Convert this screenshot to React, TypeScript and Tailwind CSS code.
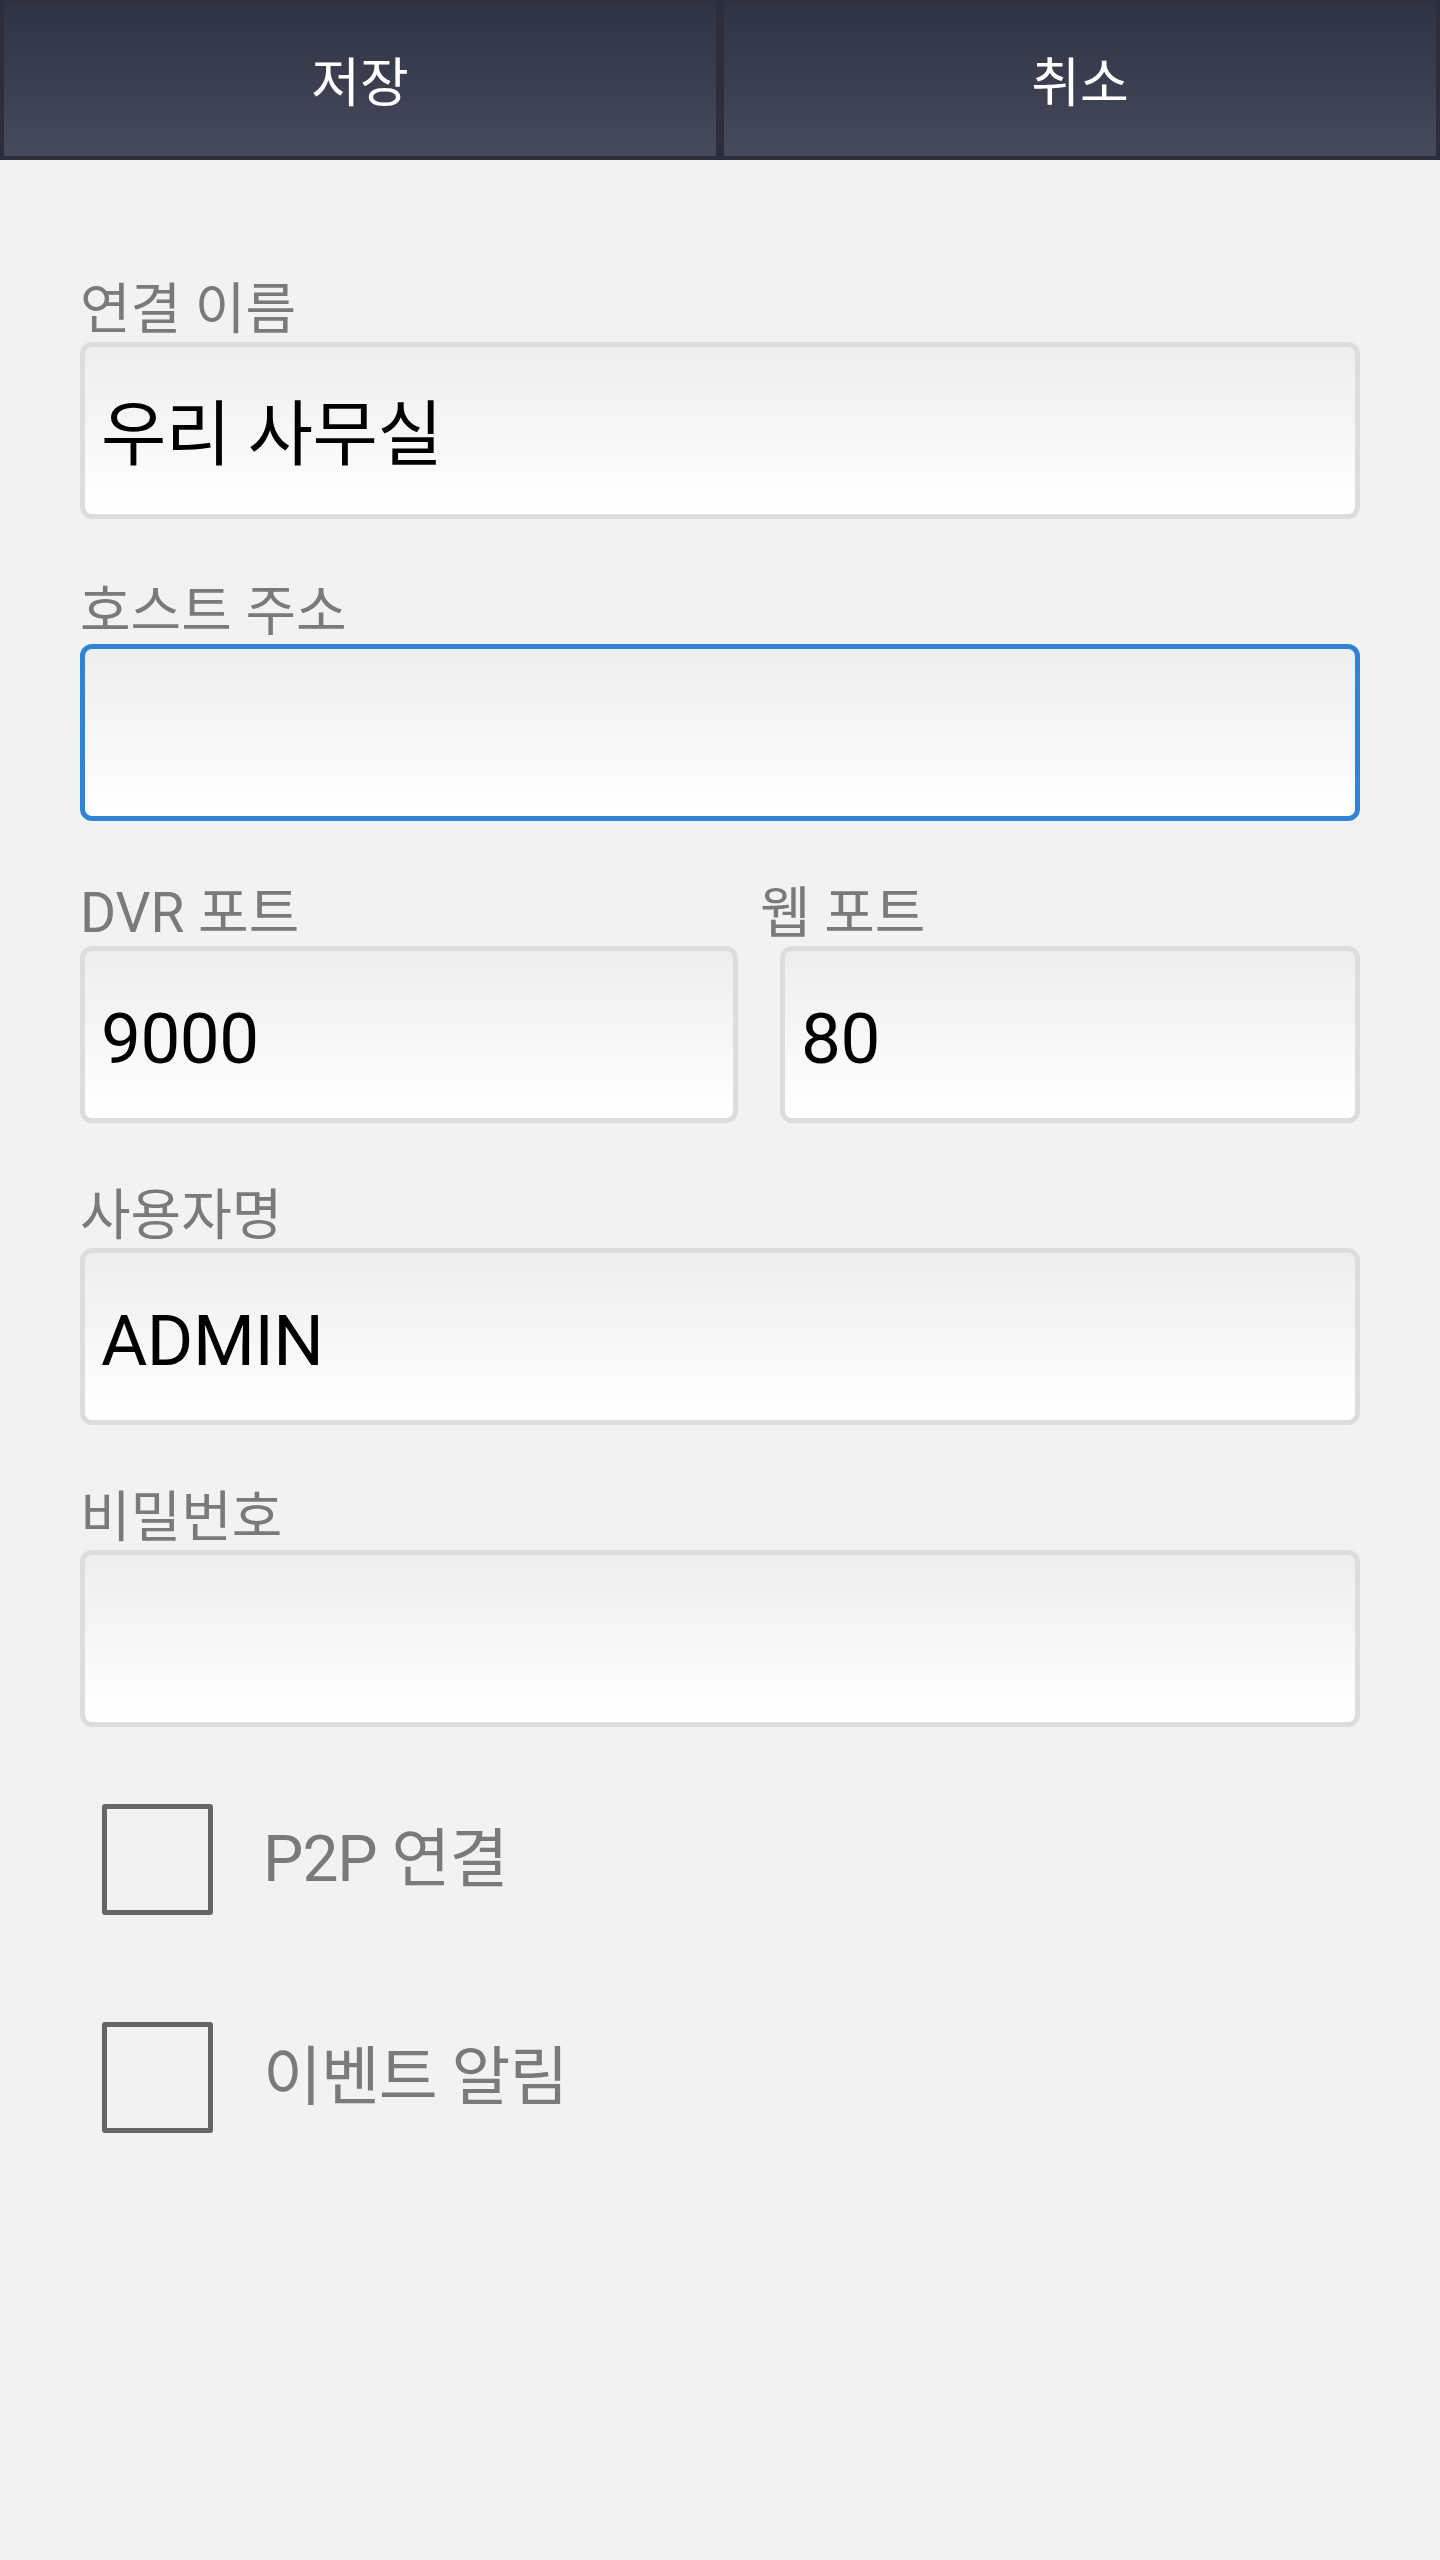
import React from "react";

const FONT = { fontFamily: 'Roboto, "Noto Sans CJK KR", sans-serif' };

function HeaderButton({ label }: { label: string }) {
  return (
    <div className="flex-1 h-full flex items-center justify-center pt-[12px] border-x-4 border-b-4 border-t border-[#2c2e3c] bg-gradient-to-b from-[#2f3242] to-[#474a5c]">
      <span className="text-white text-[53px] leading-none">{label}</span>
    </div>
  );
}

function Box({ value, focused }: { value?: string; focused?: boolean }) {
  return (
    <div
      className={
        "h-[177px] rounded-[12px] border-[5px] flex items-center pl-[16px] pt-[8px] bg-gradient-to-b from-[#eeeeee] to-[#ffffff] " +
        (focused ? "border-[#3183d6]" : "border-[#dddddd]")
      }
    >
      <span className="text-black text-[71px] leading-none tracking-[-0.5px]">{value}</span>
    </div>
  );
}

function Label({ text, className = "" }: { text: string; className?: string }) {
  return (
    <div className={"h-[66px] flex items-center text-[#7a7a7a] text-[55px] leading-none " + className}>
      {text}
    </div>
  );
}

function Field({ label, value, focused }: { label: string; value?: string; focused?: boolean }) {
  return (
    <div className="flex flex-col">
      <Label text={label} />
      <Box value={value} focused={focused} />
    </div>
  );
}

function Check({ label }: { label: string }) {
  return (
    <div className="flex items-center pl-[22px]">
      <div className="w-[111px] h-[111px] border-[5px] border-[#666666] rounded-[3px]" />
      <span className="ml-[50px] text-[#7a7a7a] text-[64px] leading-none tracking-[-1px]">{label}</span>
    </div>
  );
}

export default function App() {
  return (
    <div className="w-[1440px] h-[2560px] bg-[#f2f2f2]" style={FONT}>
      <div className="h-[160px] flex">
        <HeaderButton label="저장" />
        <HeaderButton label="취소" />
      </div>
      <div className="px-[80px] pt-[116px] flex flex-col gap-[59px]">
        <Field label="연결 이름" value="우리 사무실" />
        <Field label="호스트 주소" focused />
        <div className="flex gap-[42px]">
          <div className="w-[658px] flex flex-col">
            <Label text="DVR 포트" />
            <Box value="9000" />
          </div>
          <div className="flex-1 flex flex-col">
            <Label text="웹 포트" className="-ml-[20px]" />
            <Box value="80" />
          </div>
        </div>
        <Field label="사용자명" value="ADMIN" />
        <Field label="비밀번호" />
      </div>
      <div className="flex flex-col gap-[107px] pt-[77px] px-[80px]">
        <Check label="P2P 연결" />
        <Check label="이벤트 알림" />
      </div>
    </div>
  );
}
